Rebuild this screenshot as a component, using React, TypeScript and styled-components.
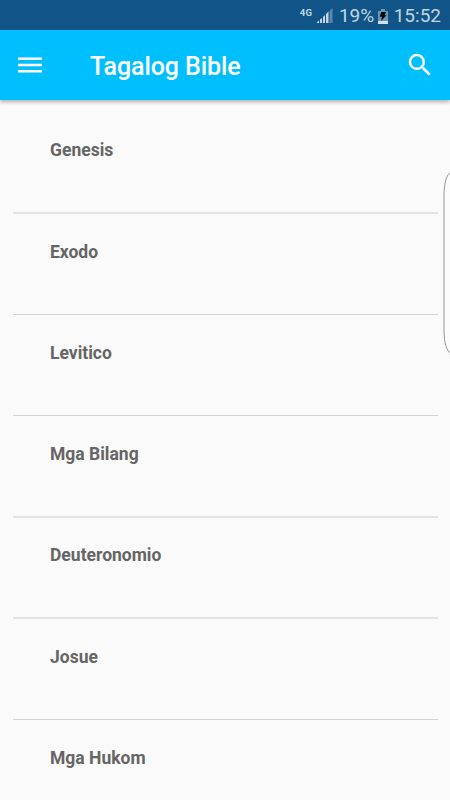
import React from "react";
import styled, { createGlobalStyle } from "styled-components";

const GlobalStyle = createGlobalStyle`
  * { box-sizing: border-box; }
  body { margin: 0; background: #fafafa; font-family: Roboto, "Noto Sans", sans-serif; }
`;

const Screen = styled.div`
  position: relative;
  display: flex;
  flex-direction: column;
  width: 450px;
  height: 800px;
  overflow: hidden;
  background: #fafafa;
`;

const StatusBar = styled.header`
  flex: none;
  display: flex;
  align-items: center;
  justify-content: flex-end;
  height: 30px;
  padding: 2px 9px 0 0;
  background: #115588;
  color: #c3d5e3;
`;

const Network = styled.span`
  margin: -7px 5px 0 0;
  font-size: 9.5px;
  line-height: 12px;
  font-weight: 700;
  letter-spacing: 0.3px;
`;

const StatusText = styled.span<{ $before: number; $after?: number }>`
  margin-left: ${(p) => p.$before}px;
  margin-right: ${(p) => p.$after ?? 0}px;
  font-size: 19px;
  line-height: 28px;
`;

const StatusIcon = styled.svg`
  display: block;
  flex: none;
`;

const Toolbar = styled.nav`
  position: relative;
  flex: none;
  display: flex;
  align-items: center;
  height: 70px;
  padding: 0 15px;
  background: #00bfff;
  color: #fff;
  box-shadow: 0 2px 4px rgba(0, 0, 0, 0.3);
`;

const IconButton = styled.button`
  display: flex;
  padding: 0;
  border: 0;
  background: none;
  color: inherit;
`;

const Title = styled.h1`
  flex: 1;
  margin: 3px 0 0 45px;
  font-size: 25px;
  line-height: 30px;
  font-weight: 500;
  letter-spacing: -0.08px;
`;

const List = styled.ul`
  flex: none;
  margin: 0;
  padding: 11px 12px 0 12px;
  list-style: none;
`;

const Row = styled.li`
  display: flex;
  align-items: center;
  height: 101.25px;
  padding: 0 0 22.4px 38px;
  color: #656565;
  font-size: 17.5px;
  line-height: 24px;
  font-weight: 700;
`;

const Divider = styled.div<{ $soft: boolean }>`
  height: ${(p) => (p.$soft ? 2 : 1)}px;
  margin: 0 0 ${(p) => (p.$soft ? -2 : -1)}px 0.5px;
  background: ${(p) => (p.$soft ? "#e3e3e3" : "#d3d3d3")};
`;

const EdgeHandle = styled.svg`
  position: absolute;
  top: 170px;
  right: 0;
`;

const books = [
  { name: "Genesis", soft: true },
  { name: "Exodo", soft: false },
  { name: "Levitico", soft: false },
  { name: "Mga Bilang", soft: true },
  { name: "Deuteronomio", soft: true },
  { name: "Josue", soft: false },
  { name: "Mga Hukom", soft: true },
];

function Signal() {
  return (
    <StatusIcon width="16" height="16" viewBox="0 0 16 16" fill="#c3d5e3">
      <path d="M0 15V14L2 12.500V15zM3 15v-3.500l2-1.500V15zM6 15V9l2-2v8zM9 15V6l2.500-2.500V15z" />
      <path d="M12.500 15V3l3-3v15z" opacity="0.4" />
    </StatusIcon>
  );
}

function Battery() {
  return (
    <StatusIcon width="10" height="16" viewBox="0 0 10 16">
      <path d="M3 1h4v2h3v13H0V3h3z" fill="#6998b8" />
      <path d="M0 13h10v3H0z" fill="#d4e0e9" />
      <path d="M3.200 4h4.800L6.600 7.200h2L3 13l1-4.200H1.700z" fill="#080c10" />
    </StatusIcon>
  );
}

export default function App() {
  return (
    <>
      <GlobalStyle />
      <Screen>
        <StatusBar>
          <Network>4G</Network>
          <Signal />
          <StatusText $before={5.5} $after={3.5}>19%</StatusText>
          <Battery />
          <StatusText $before={6}>15:52</StatusText>
        </StatusBar>
        <Toolbar>
          <IconButton aria-label="Menu">
            <svg width="30" height="30" viewBox="0 0 24 24" fill="currentColor">
              <path d="M2.400 18h19.200v-2.100H2.400zM2.400 13h19.200v-2.100H2.400zM2.400 8h19.200V5.900H2.400z" />
            </svg>
          </IconButton>
          <Title>Tagalog Bible</Title>
          <IconButton aria-label="Search">
            <svg width="30" height="30" viewBox="0 0 24 24" fill="currentColor">
              <path d="M15.500 14h-.79l-.28-.27A6.471 6.471 0 0 0 16 9.500 6.500 6.500 0 1 0 9.500 16c1.610 0 3.090-.59 4.230-1.570l.27.28v.79l5 4.990L20.490 19l-4.990-5zm-6 0C7.010 14 5 11.990 5 9.500S7.010 5 9.500 5 14 7.010 14 9.500 11.990 14 9.500 14z" />
            </svg>
          </IconButton>
        </Toolbar>
        <List>
          {books.map((book) => (
            <React.Fragment key={book.name}>
              <Row>{book.name}</Row>
              <Divider $soft={book.soft} />
            </React.Fragment>
          ))}
        </List>
        <EdgeHandle width="7" height="186" viewBox="0 0 7 186">
          <path d="M8 2C3 5 1.500 13 1 24v138c.5 11 2 18 7 22" fill="#fcfcfc" stroke="#959595" />
        </EdgeHandle>
      </Screen>
    </>
  );
}
